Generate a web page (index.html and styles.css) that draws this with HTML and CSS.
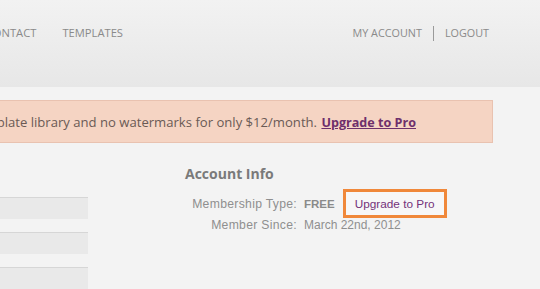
FILE: index.html
```html
<!DOCTYPE html>
<html>
<head>
<meta charset="utf-8">
<link rel="stylesheet" href="styles.css">
</head>
<body>
<header class="header">
  <nav class="nav-left">
    <a class="nav-link">HOME</a>
    <a class="nav-link">ABOUT</a>
    <a class="nav-link">CONTACT</a>
    <a class="nav-link">TEMPLATES</a>
  </nav>
  <nav class="nav-right">
    <a class="nav-link">MY ACCOUNT</a>
    <span class="nav-sep"></span>
    <a class="nav-link">LOGOUT</a>
  </nav>
</header>
<div class="banner">
  <p class="banner-text">Upgrade now for access to our complete template library and no watermarks for only $12/month. <a class="banner-link">Upgrade to Pro</a></p>
</div>
<main class="content">
  <form class="form-col">
    <input class="field" type="text">
    <input class="field" type="text">
    <input class="field" type="text">
  </form>
  <section class="account">
    <h2 class="account-title">Account Info</h2>
    <div class="info-grid">
      <span class="info-label">Membership Type:</span>
      <span class="info-value"><b class="plan">FREE</b><a class="upgrade-btn">Upgrade to Pro</a></span>
      <span class="info-label">Member Since:</span>
      <span class="info-value">March 22nd, 2012</span>
    </div>
  </section>
</main>
</body>
</html>
```
FILE: styles.css
```css
html, body {
  margin: 0;
  padding: 0;
}
body {
  width: 540px;
  height: 289px;
  overflow: hidden;
  background: #f3f3f3;
  font-family: "Open Sans", sans-serif;
}
.header {
  height: 87px;
  background: linear-gradient(#f2f2f2, #e7e7e7);
  display: flex;
  justify-content: space-between;
  align-items: flex-start;
}
.nav-left {
  margin-left: -300px;
  width: 423px;
  display: flex;
  justify-content: flex-end;
  gap: 26px;
  padding-top: 25px;
}
.nav-right {
  display: flex;
  align-items: center;
  gap: 11px;
  padding-top: 25px;
  padding-right: 51px;
}
.nav-link {
  font-size: 11.2px;
  color: #8a8a8a;
  line-height: 16px;
}
.nav-right .nav-link {
  font-size: 10.8px;
}
.nav-sep {
  width: 1px;
  height: 15px;
  background: #9a9a9a;
}
.banner {
  margin-top: 13px;
  margin-left: -300px;
  width: 793px;
  height: 43px;
  box-sizing: border-box;
  background: #f5d4c3;
  border: 1px solid #e9c2b0;
  display: flex;
  align-items: center;
  justify-content: flex-end;
  padding-right: 76px;
}
.banner-text {
  margin: 0;
  white-space: nowrap;
  font-size: 13.1px;
  color: #6a5a55;
}
.banner-link {
  font-weight: bold;
  font-size: 12.6px;
  color: #6e2f6c;
  text-decoration: underline;
  margin-left: 1px;
}
.content {
  display: grid;
  grid-template-columns: 88px 1fr;
  column-gap: 97px;
}
.form-col {
  display: flex;
  flex-direction: column;
  gap: 13px;
  padding-top: 54px;
  margin-left: -200px;
  width: 288px;
}
.field {
  width: 288px;
  height: 22px;
  box-sizing: border-box;
  margin: 0;
  border: 0;
  border-top: 1px solid #d6d6d6;
  background: #e9e9e9;
}
.account {
  padding-top: 22px;
}
.account-title {
  margin: 0 0 6px;
  font-size: 14px;
  font-weight: bold;
  color: #7a7a7a;
  line-height: 18px;
}
.info-grid {
  display: grid;
  grid-template-columns: 112px auto;
  column-gap: 7px;
  row-gap: 0;
  align-items: center;
  font-family: "Liberation Sans", Arial, sans-serif;
  font-size: 12px;
  color: #8f8f8f;
}
.info-label {
  text-align: right;
  font-size: 12.2px;
  letter-spacing: 0.3px;
}
.info-value {
  display: flex;
  align-items: center;
}
.plan {
  color: #8a8a8a;
  font-weight: bold;
  font-size: 11.5px;
  margin-right: 8px;
}
.upgrade-btn {
  display: inline-block;
  border: 3px solid #f0883a;
  padding: 5px 9px 4px;
  line-height: 14px;
  color: #74327a;
  font-size: 11.8px;
  background: #f7f7f7;
}
```
